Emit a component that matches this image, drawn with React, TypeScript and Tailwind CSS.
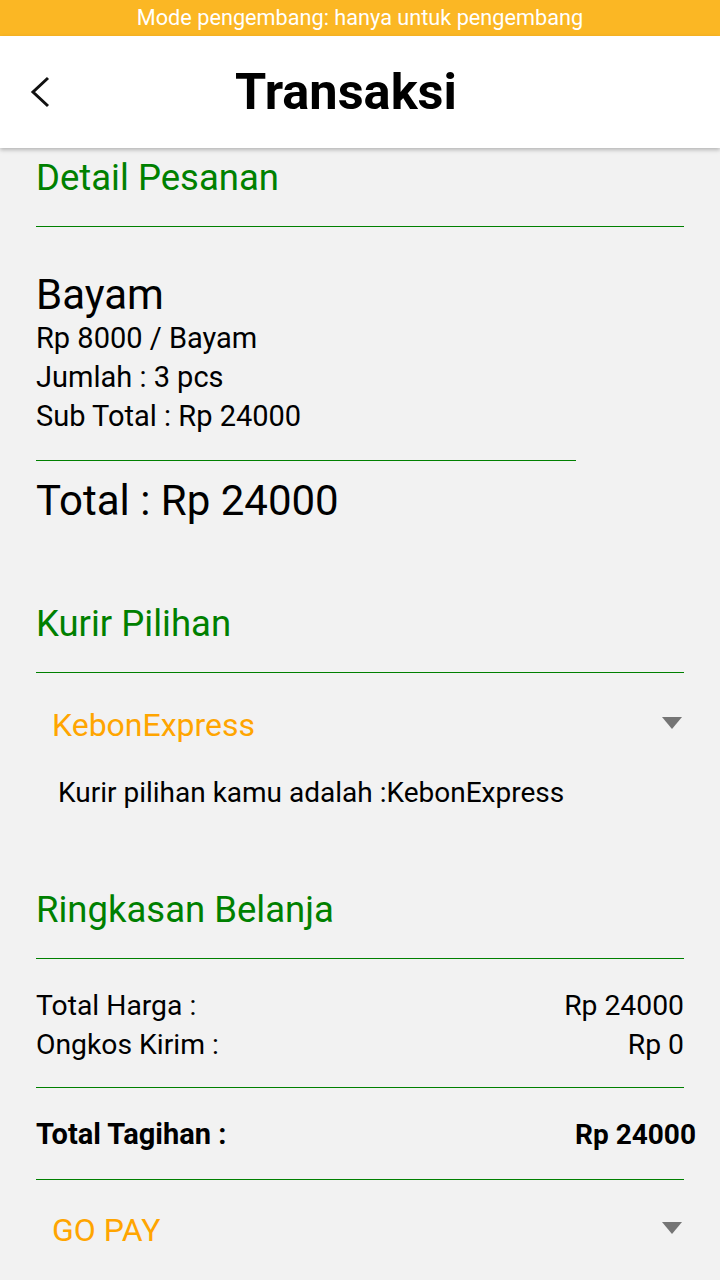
import React from "react";

const Tri = () => (
  <svg width="20" height="12" viewBox="0 0 20 12" className="shrink-0">
    <polygon points="0,0 20,0 10,12" fill="#757575" />
  </svg>
);

export default function App() {
  return (
    <div
      className="w-[720px] h-[1280px] overflow-hidden bg-[#f2f2f2] flex flex-col"
      style={{ fontFamily: "Roboto, 'Noto Sans', sans-serif" }}
    >
      <div className="h-[36px] bg-[#fbb724] flex items-center justify-center text-white text-[21.7px] leading-none">
        Mode pengembang: hanya untuk pengembang
      </div>
      <div className="h-[112px] bg-white flex items-center relative z-10 shadow-[0_2px_4px_rgba(0,0,0,0.25)]">
        <div className="w-[80px] pl-[28px] flex items-center">
          <svg width="24" height="32" viewBox="0 0 24 32">
            <polyline points="20,2 5,16 20,30" fill="none" stroke="#111" strokeWidth="3" />
          </svg>
        </div>
        <div className="flex-1 flex justify-center pr-[108px] text-[50.5px] font-bold text-black leading-none">
          Transaksi
        </div>
      </div>

      <div className="px-[36px] flex flex-col">
        <div className="text-[36.5px] text-[#008000] leading-[36px] mt-[12px] h-[36px]">Detail Pesanan</div>
        <div className="h-px bg-[#008000] mt-[30px]" />

        <div className="text-[42px] text-black leading-[42px] h-[42px] mt-[47px]">Bayam</div>
        <div className="text-[29px] text-black leading-[39px] mt-[3px]">
          <div>Rp 8000 / Bayam</div>
          <div>Jumlah : 3 pcs</div>
          <div>Sub Total : Rp 24000</div>
        </div>
        <div className="h-px bg-[#008000] w-[540px] mt-[24px]" />
        <div className="text-[42px] text-black leading-[42px] h-[42px] mt-[19px]">Total : Rp 24000</div>

        <div className="text-[36.5px] text-[#008000] leading-[36px] h-[36px] mt-[84px]">Kurir Pilihan</div>
        <div className="h-px bg-[#008000] mt-[30px]" />
        <div className="flex items-center justify-between pl-[16px] mt-[36px] h-[32px]">
          <span className="text-[32px] text-[#ffa500] leading-[32px]">KebonExpress</span>
          <div className="pr-[2px] -mt-[4px]"><Tri /></div>
        </div>
        <div className="pl-[22px] text-[28px] text-black leading-[28px] h-[28px] mt-[38px]">Kurir pilihan kamu adalah :KebonExpress</div>

        <div className="text-[36.5px] text-[#008000] leading-[36px] h-[36px] mt-[85px]">Ringkasan Belanja</div>
        <div className="h-px bg-[#008000] mt-[30px]" />
        <div className="text-[28.3px] text-black leading-[39px] mt-[27px]">
          <div className="flex justify-between h-[39px]"><span>Total Harga :</span><span>Rp 24000</span></div>
          <div className="flex justify-between h-[39px]"><span>Ongkos Kirim :</span><span>Rp 0</span></div>
        </div>
        <div className="h-px bg-[#008000] mt-[23px]" />
        <div className="flex justify-between items-center h-[29px] text-[28px] font-bold text-black leading-[29px] mt-[32px] -mr-[12px]">
          <span className="text-[29px]">Total Tagihan :</span><span>Rp 24000</span>
        </div>
        <div className="h-px bg-[#008000] mt-[30px]" />
        <div className="flex items-center justify-between pl-[16px] mt-[34px] h-[32px]">
          <span className="text-[32px] text-[#ffa500] leading-[32px]">GO PAY</span>
          <div className="pr-[2px] -mt-[4px]"><Tri /></div>
        </div>
      </div>
    </div>
  );
}
